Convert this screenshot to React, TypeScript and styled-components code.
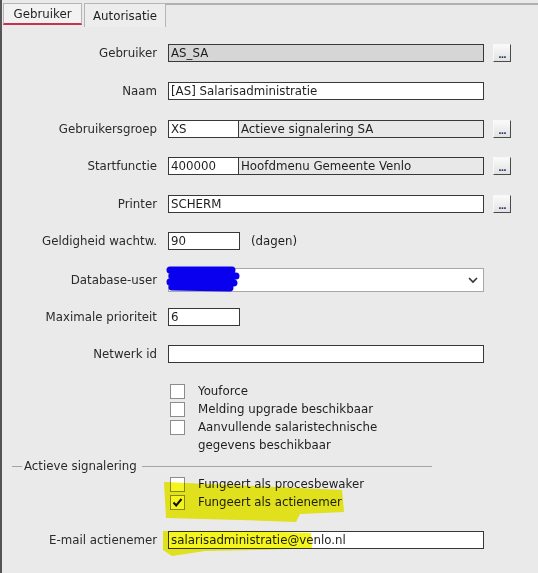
import {createGlobalStyle} from 'styled-components';
import styled from 'styled-components';

const GlobalStyle = createGlobalStyle`
  html, body {
    margin: 0;
    padding: 0;
    background: #eaeaea;
  }
  body {
    font-family: "DejaVu Sans", "Liberation Sans", sans-serif;
    font-size: 11.8px;
    color: #1e1e1e;
  }
`;

const Window = styled.div`
  position: relative;
  width: 536px;
  height: 573px;
  border-left: 2px solid #555;
  background: #eaeaea;
  overflow: hidden;
`;

const TabBar = styled.div`
  display: flex;
  align-items: flex-end;
  height: 27px;
  padding-left: 1px;
`;

const Tab = styled.div<{active?: boolean}>`
  box-sizing: border-box;
  height: ${p => (p.active ? 22 : 24)}px;
  padding: 0 ${p => (p.active ? 9.5 : 8)}px;
  display: flex;
  align-items: center;
  margin-right: ${p => (p.active ? 2 : 0)}px;
  background: ${p => (p.active ? '#f2f2f2' : '#ededed')};
  border: 1px solid #b5b5b5;
  border-bottom: ${p => (p.active ? '2px solid #c8324f' : 'none')};
  margin-bottom: ${p => (p.active ? 2 : 0)}px;
`;

const TabFiller = styled.div`
  flex: 1;
  align-self: flex-start;
  margin-top: 3px;
  border-top: 2px solid #b0b0b0;
`;

const Form = styled.div`
  padding-top: 7px;
`;

const Row = styled.div<{h: number}>`
  display: flex;
  align-items: center;
  height: ${p => p.h}px;
`;

const Label = styled.div`
  width: 155px;
  margin-right: 11px;
  text-align: right;
  white-space: nowrap;
  color: #2a2a2a;
`;

const Input = styled.div<{w: number; shade?: 'ro' | 'desc'}>`
  box-sizing: border-box;
  width: ${p => p.w}px;
  height: 18px;
  line-height: 16px;
  padding: 0 2px;
  border: 1px solid #383838;
  background: ${p => (p.shade === 'ro' ? '#d6d6d6' : p.shade === 'desc' ? '#e8e8e8' : '#ffffff')};
  white-space: nowrap;
  overflow: hidden;
`;

const Split = styled.div`
  display: flex;
  & > ${Input} + ${Input} {
    border-left: none;
  }
`;

const DotsButton = styled.div`
  box-sizing: border-box;
  width: 18px;
  height: 18px;
  margin-left: 9px;
  background: linear-gradient(#fafafa, #e2e2e2);
  border: 1px solid #f8f8f8;
  border-right-color: #4a4a4a;
  border-bottom-color: #4a4a4a;
  display: flex;
  align-items: flex-end;
  justify-content: center;
  font-size: 9px;
  line-height: 11px;
  font-weight: bold;
  color: #223366;
  letter-spacing: -1px;
`;

const Unit = styled.span`
  margin-left: 11px;
`;

const Select = styled.div`
  box-sizing: border-box;
  width: 316px;
  height: 24px;
  border: 1px solid #a8a8a8;
  background: #fff;
  display: flex;
  align-items: center;
  justify-content: flex-end;
  padding-right: 4px;
`;

const CheckList = styled.div`
  display: flex;
  flex-direction: column;
  margin-left: 168px;
`;

const CheckItem = styled.div`
  display: flex;
  align-items: flex-start;
  line-height: 18px;
`;

const Box = styled.div`
  box-sizing: border-box;
  flex: none;
  width: 15px;
  height: 15px;
  margin-top: 2px;
  margin-right: 13px;
  border: 1px solid #8c8c8c;
  background: #fff;
  display: flex;
  align-items: center;
  justify-content: center;
`;

const Group = styled.div`
  display: flex;
  align-items: center;
  height: 18px;
  margin-top: 3px;
  &::before {
    content: '';
    width: 10px;
    margin-left: 10px;
    border-top: 1px solid #a4a4a4;
  }
  &::after {
    content: '';
    width: 290px;
    margin-left: 5px;
    border-top: 1px solid #a4a4a4;
  }
`;

const GroupTitle = styled.span`
  margin-left: 2px;
  color: #2a2a2a;
`;

const Overlay = styled.svg`
  position: absolute;
  left: -2px;
  top: 0;
  width: 538px;
  height: 573px;
  pointer-events: none;
`;

const Check = () => (
  <svg width="11" height="11" viewBox="0 0 11 11">
    <path d="M1.5 5.5 L4.2 8.5 L9.5 2" fill="none" stroke="#111" strokeWidth="2" />
  </svg>
);

const Chevron = () => (
  <svg width="12" height="8" viewBox="0 0 12 8">
    <path d="M2 2 L6 6 L10 2" fill="none" stroke="#333" strokeWidth="1.6" />
  </svg>
);

export default function App() {
  return (
    <Window>
      <GlobalStyle />
      <TabBar>
        <Tab active>Gebruiker</Tab>
        <Tab>Autorisatie</Tab>
        <TabFiller />
      </TabBar>
      <Form>
        <Row h={38}>
          <Label>Gebruiker</Label>
          <Input w={316} shade="ro">AS_SA</Input>
          <DotsButton>...</DotsButton>
        </Row>
        <Row h={38}>
          <Label>Naam</Label>
          <Input w={316}>[AS] Salarisadministratie</Input>
        </Row>
        <Row h={37}>
          <Label>Gebruikersgroep</Label>
          <Split>
            <Input w={71}>XS</Input>
            <Input w={245} shade="desc">Actieve signalering SA</Input>
          </Split>
          <DotsButton>...</DotsButton>
        </Row>
        <Row h={38}>
          <Label>Startfunctie</Label>
          <Split>
            <Input w={71}>400000</Input>
            <Input w={245} shade="desc">Hoofdmenu Gemeente Venlo</Input>
          </Split>
          <DotsButton>...</DotsButton>
        </Row>
        <Row h={37}>
          <Label>Printer</Label>
          <Input w={316}>SCHERM</Input>
          <DotsButton>...</DotsButton>
        </Row>
        <Row h={38}>
          <Label>Geldigheid wachtw.</Label>
          <Input w={72}>90</Input>
          <Unit>(dagen)</Unit>
        </Row>
        <Row h={39}>
          <Label>Database-user</Label>
          <Select>
            <Chevron />
          </Select>
        </Row>
        <Row h={36}>
          <Label>Maximale prioriteit</Label>
          <Input w={72}>6</Input>
        </Row>
        <Row h={38}>
          <Label>Netwerk id</Label>
          <Input w={316} />
        </Row>
        <CheckList style={{marginTop: 9}}>
          <CheckItem>
            <Box />
            Youforce
          </CheckItem>
          <CheckItem>
            <Box />
            Melding upgrade beschikbaar
          </CheckItem>
          <CheckItem>
            <Box />
            <span>
              Aanvullende salaristechnische
              <br />
              gegevens beschikbaar
            </span>
          </CheckItem>
        </CheckList>
        <Group>
          <GroupTitle>Actieve signalering</GroupTitle>
        </Group>
        <CheckList>
          <CheckItem>
            <Box />
            Fungeert als procesbewaker
          </CheckItem>
          <CheckItem>
            <Box>
              <Check />
            </Box>
            Fungeert als actienemer
          </CheckItem>
        </CheckList>
        <Row h={38} style={{marginTop: 10}}>
          <Label>E-mail actienemer</Label>
          <Input w={316}>salarisadministratie@venlo.nl</Input>
        </Row>
      </Form>
      <Overlay viewBox="0 0 538 573">
        <path
          d="M170 270 L232 270 M172 276 L236 276 M170 282 L234 283 M172 287 L230 288"
          fill="none"
          stroke="#0a00f0"
          strokeWidth="7"
          strokeLinecap="round"
        />
        <g fill="#f4f41e" style={{mixBlendMode: 'multiply'}}>
          <path d="M164 482 L230 485 L300 488 L342 490 L344 512 L300 514 L296 522 L240 520 L166 518 Z" />
          <path d="M163 531 L250 531 L311 533 L312 548 L260 550 L205 551 L172 556 L163 550 Z" />
        </g>
      </Overlay>
    </Window>
  );
}
